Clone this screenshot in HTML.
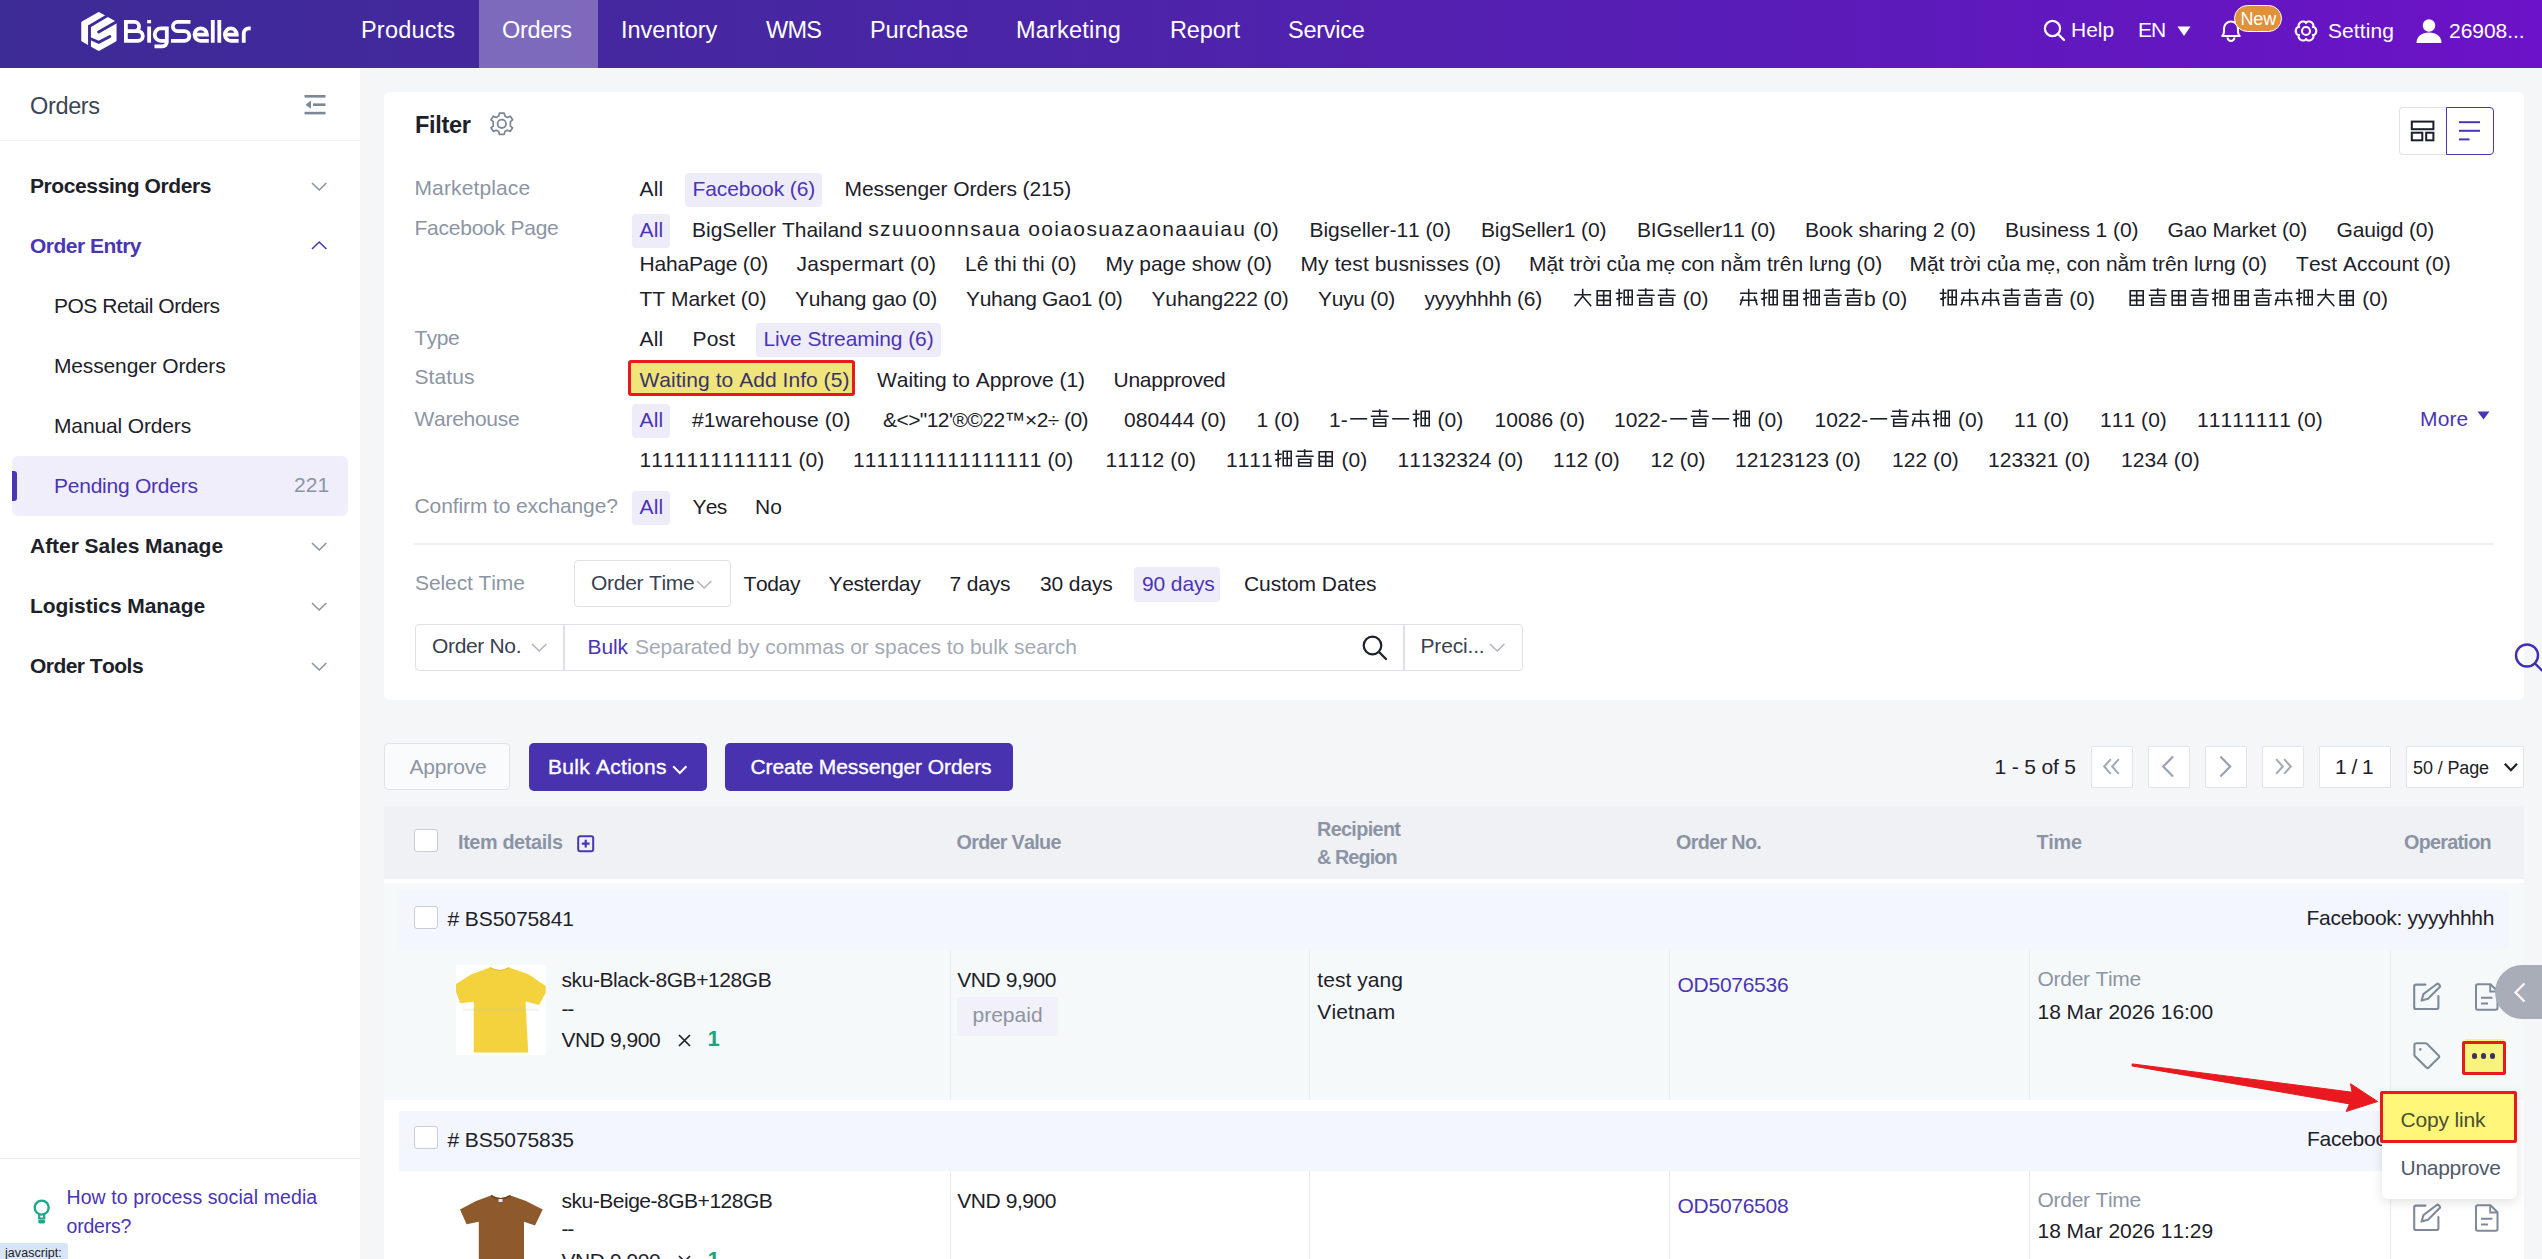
<!DOCTYPE html>
<html><head><meta charset="utf-8"><title>BigSeller Orders</title>
<style>
*{margin:0;padding:0;box-sizing:border-box}
html,body{width:2542px;height:1259px;overflow:hidden;background:#f5f6f8;font-family:"Liberation Sans",sans-serif;}
.t{position:absolute;white-space:nowrap;font-kerning:none;}
.b{position:absolute;}
svg.b{overflow:visible}
.cj{display:inline-block;overflow:hidden;vertical-align:top;white-space:nowrap;height:23px;line-height:23px}
.th{}
.cj{position:relative}
.ct{color:transparent}
.pg{position:absolute;left:0;top:0}
.pt{position:absolute;left:0;top:0}
</style></head><body>
<div class="b" style="left:0.0px;top:0.0px;width:2542.0px;height:68.0px;background:linear-gradient(90deg,#3d2b96 0%,#4a25a6 40%,#5a1cb8 70%,#6c12c8 100%);"></div>
<div class="b" style="left:479.0px;top:0.0px;width:119.0px;height:68.0px;background:rgba(255,255,255,0.31);"></div>
<svg class="b" style="left:75.0px;top:5.0px;" width="50" height="50" viewBox="0 0 50 50">
<path d="M23.8 8.3 L40.3 17.6 L40.3 35.3 L23.8 44.6 L7.5 35.3 L7.5 17.6 Z" fill="#fff" stroke="#fff" stroke-width="2.5" stroke-linejoin="round"/>
<g stroke="#3e2b98" fill="none" stroke-width="2.9">
<path d="M14.5 20 L14.5 49"/>
<path d="M14.5 21.2 L36 8.6"/>
<path d="M23.6 27.1 L46 14.2" stroke-linecap="round"/>
<path d="M14.5 33.2 L23.8 37.4 L34.8 31.5" stroke-linecap="round" stroke-linejoin="miter"/>
</g></svg>
<svg class="b" style="left:115.0px;top:10.0px;" width="140" height="40" viewBox="0 0 140 40"><g fill="none" stroke="#fff" stroke-width="3.8"><path d="M10.9 10 V32.7 M9 11.9 H19.5 A4.6 4.6 0 0 1 19.5 21.1 H10.9 M10.9 21.1 H22.95 A4.85 4.85 0 0 1 22.95 30.8 H9"/><path d="M34.15 16.5 V32.7"/><path d="M51.8 16.5 V32 A4.3 4.3 0 0 1 47.5 36.3 H39.5 M51.8 18.4 H45.9 A6.2 6.2 0 0 0 45.9 30.8 H51.8"/><path d="M75.5 11.9 H62.5 A4.6 4.6 0 0 0 62.5 21.1 H69.5 A4.85 4.85 0 0 1 69.5 30.8 H56"/><path d="M79.5 24.6 H91.9 A6.2 6.2 0 1 0 85.7 30.8 H93.8"/><path d="M97.8 10 V32.7 M104.3 10 V32.7"/><path d="M109.9 24.6 H121.7 A5.9 6.2 0 1 0 115.8 30.8 H123.6"/><path d="M128.75 32.7 V23.5 A5.1 5.1 0 0 1 133.85 18.4 H135.7"/></g><rect x="32.2" y="10" width="3.9" height="3.3" fill="#fff"/></svg>
<div class="t " style="left:361.0px;top:16.2px;font-size:23.5px;line-height:28px;color:#fff;letter-spacing:0.195px;">Products</div>
<div class="t " style="left:502.0px;top:16.2px;font-size:23.5px;line-height:28px;color:#fff;letter-spacing:-0.346px;">Orders</div>
<div class="t " style="left:621.0px;top:16.2px;font-size:23.5px;line-height:28px;color:#fff;letter-spacing:-0.047px;">Inventory</div>
<div class="t " style="left:766.0px;top:16.2px;font-size:23.5px;line-height:28px;color:#fff;letter-spacing:-0.708px;">WMS</div>
<div class="t " style="left:870.0px;top:16.2px;font-size:23.5px;line-height:28px;color:#fff;letter-spacing:-0.139px;">Purchase</div>
<div class="t " style="left:1016.0px;top:16.2px;font-size:23.5px;line-height:28px;color:#fff;letter-spacing:0.205px;">Marketing</div>
<div class="t " style="left:1170.0px;top:16.2px;font-size:23.5px;line-height:28px;color:#fff;letter-spacing:-0.12px;">Report</div>
<div class="t " style="left:1288.0px;top:16.2px;font-size:23.5px;line-height:28px;color:#fff;letter-spacing:-0.268px;">Service</div>
<svg class="b" style="left:2043.0px;top:19.0px;" width="24" height="24" viewBox="0 0 24 24"><circle cx="9.5" cy="9.5" r="7.6" fill="none" stroke="#fff" stroke-width="2.2"/><path d="M15 15 L21 21" stroke="#fff" stroke-width="2.4" stroke-linecap="round"/></svg>
<div class="t " style="left:2071.0px;top:16.8px;font-size:21px;line-height:25px;color:#fff;letter-spacing:-0.039px;">Help</div>
<div class="t " style="left:2138.0px;top:16.8px;font-size:21px;line-height:25px;color:#fff;letter-spacing:-1.125px;">EN</div>
<svg class="b" style="left:2177.0px;top:26.0px;" width="14" height="11" viewBox="0 0 14 11"><path d="M0.5 0.5 L13.5 0.5 L7 10 Z" fill="#fff"/></svg>
<svg class="b" style="left:2219.0px;top:19.0px;" width="24" height="24" viewBox="0 0 24 24"><path d="M3.3 17 Q5 15.3 5 12.5 V9.5 A7 7 0 0 1 19 9.5 V12.5 Q19 15.3 20.7 17 Z" fill="none" stroke="#fff" stroke-width="2.1" stroke-linejoin="round"/><path d="M8.6 18.6 A3.4 3.4 0 0 0 15.4 18.6" fill="none" stroke="#fff" stroke-width="2.1"/></svg>
<div class="b" style="left:2233.6px;top:4.6px;width:48.6px;height:27.4px;background:#e0913a;border:1.4px solid #fff;border-radius:14px;"></div>
<div class="t " style="left:2240.4px;top:7.8px;font-size:18px;line-height:22px;color:#fff;letter-spacing:-0.031px;">New</div>
<svg class="b" style="left:2295.0px;top:20.0px;" width="22" height="22" viewBox="0 0 22 22"><path d="M21.30 11.00 L21.27 11.54 L21.18 12.07 L21.03 12.59 L20.82 13.09 L20.55 13.56 L20.22 13.99 L19.83 14.39 L19.37 14.72 L18.81 14.98 L17.84 14.95 L18.35 15.77 L18.41 16.38 L18.35 16.95 L18.20 17.49 L17.99 17.99 L17.72 18.46 L17.39 18.89 L17.02 19.28 L16.60 19.62 L16.15 19.92 L15.67 20.16 L15.16 20.35 L14.64 20.48 L14.10 20.54 L13.56 20.55 L13.02 20.48 L12.48 20.34 L11.96 20.11 L11.46 19.75 L11.00 18.90 L10.54 19.75 L10.04 20.11 L9.52 20.34 L8.98 20.48 L8.44 20.55 L7.90 20.54 L7.36 20.48 L6.84 20.35 L6.33 20.16 L5.85 19.92 L5.40 19.62 L4.98 19.28 L4.61 18.89 L4.28 18.46 L4.01 17.99 L3.80 17.49 L3.65 16.95 L3.59 16.38 L3.65 15.77 L4.16 14.95 L3.19 14.98 L2.63 14.72 L2.17 14.39 L1.78 13.99 L1.45 13.56 L1.18 13.09 L0.97 12.59 L0.82 12.07 L0.73 11.54 L0.70 11.00 L0.73 10.46 L0.82 9.93 L0.97 9.41 L1.18 8.91 L1.45 8.44 L1.78 8.01 L2.17 7.61 L2.63 7.28 L3.19 7.02 L4.16 7.05 L3.65 6.23 L3.59 5.62 L3.65 5.05 L3.80 4.51 L4.01 4.01 L4.28 3.54 L4.61 3.11 L4.98 2.72 L5.40 2.38 L5.85 2.08 L6.33 1.84 L6.84 1.65 L7.36 1.52 L7.90 1.46 L8.44 1.45 L8.98 1.52 L9.52 1.66 L10.04 1.89 L10.54 2.25 L11.00 3.10 L11.46 2.25 L11.96 1.89 L12.48 1.66 L13.02 1.52 L13.56 1.45 L14.10 1.46 L14.64 1.52 L15.16 1.65 L15.67 1.84 L16.15 2.08 L16.60 2.38 L17.02 2.72 L17.39 3.11 L17.72 3.54 L17.99 4.01 L18.20 4.51 L18.35 5.05 L18.41 5.62 L18.35 6.23 L17.84 7.05 L18.81 7.02 L19.37 7.28 L19.83 7.61 L20.22 8.01 L20.55 8.44 L20.82 8.91 L21.03 9.41 L21.18 9.93 L21.27 10.46 L21.30 11.00 Z" fill="none" stroke="#fff" stroke-width="2.1" stroke-linejoin="round"/><circle cx="11" cy="11" r="4" fill="none" stroke="#fff" stroke-width="2.1"/></svg>
<div class="t " style="left:2328.0px;top:17.8px;font-size:21px;line-height:25px;color:#fff;letter-spacing:0.074px;">Setting</div>
<svg class="b" style="left:2416.0px;top:18.0px;" width="26" height="26" viewBox="0 0 26 26"><circle cx="13" cy="7.5" r="6.2" fill="#fff"/><path d="M0.5 25 C0.5 18 6 14.5 13 14.5 C20 14.5 25.5 18 25.5 25 Z" fill="#fff"/></svg>
<div class="t " style="left:2449.0px;top:17.8px;font-size:21px;line-height:25px;color:#fff;letter-spacing:-0.033px;">26908...</div>
<div class="b" style="left:0.0px;top:68.0px;width:360.0px;height:1191.0px;background:#fff;"></div>
<div class="b" style="left:0.0px;top:140.0px;width:360.0px;height:1.0px;background:#eff1f4;"></div>
<div class="t " style="left:30.0px;top:91.5px;font-size:23.5px;line-height:28px;color:#3a4556;letter-spacing:-0.346px;">Orders</div>
<svg class="b" style="left:304.0px;top:95.0px;" width="22" height="20" viewBox="0 0 22 20"><g fill="#7d8797"><rect x="0.5" y="0" width="21" height="2.6"/><rect x="9" y="8.4" width="12.5" height="2.6"/><rect x="0.5" y="16.8" width="21" height="2.6"/><path d="M1.5 9.7 L7 5.6 L7 13.8 Z"/></g></svg>
<div class="t " style="left:30.0px;top:173.3px;font-size:21px;line-height:25px;color:#1d2129;font-weight:700;letter-spacing:-0.403px;">Processing Orders</div>
<svg class="b" style="left:311.0px;top:182.3px;" width="17" height="9" viewBox="0 0 17 9"><path d="M1 1 L8.2 8 L15.4 1" fill="none" stroke="#8a94a4" stroke-width="1.6"/></svg>
<div class="t " style="left:30.0px;top:233.0px;font-size:21px;line-height:25px;color:#4a35b5;font-weight:700;letter-spacing:-0.516px;">Order Entry</div>
<svg class="b" style="left:311.0px;top:240.7px;" width="17" height="9" viewBox="0 0 17 9"><path d="M1 8 L8.2 1 L15.4 8" fill="none" stroke="#4a35b5" stroke-width="1.6"/></svg>
<div class="t " style="left:30.0px;top:533.0px;font-size:21px;line-height:25px;color:#1d2129;font-weight:700;letter-spacing:-0.038px;">After Sales Manage</div>
<svg class="b" style="left:311.0px;top:542.0px;" width="17" height="9" viewBox="0 0 17 9"><path d="M1 1 L8.2 8 L15.4 1" fill="none" stroke="#8a94a4" stroke-width="1.6"/></svg>
<div class="t " style="left:30.0px;top:593.0px;font-size:21px;line-height:25px;color:#1d2129;font-weight:700;letter-spacing:-0.072px;">Logistics Manage</div>
<svg class="b" style="left:311.0px;top:602.0px;" width="17" height="9" viewBox="0 0 17 9"><path d="M1 1 L8.2 8 L15.4 1" fill="none" stroke="#8a94a4" stroke-width="1.6"/></svg>
<div class="t " style="left:30.0px;top:653.0px;font-size:21px;line-height:25px;color:#1d2129;font-weight:700;letter-spacing:-0.544px;">Order Tools</div>
<svg class="b" style="left:311.0px;top:662.0px;" width="17" height="9" viewBox="0 0 17 9"><path d="M1 1 L8.2 8 L15.4 1" fill="none" stroke="#8a94a4" stroke-width="1.6"/></svg>
<div class="b" style="left:12.0px;top:456.0px;width:336.0px;height:60.0px;background:#f1eefb;border-radius:6px;"></div>
<div class="b" style="left:12.0px;top:471.0px;width:5.0px;height:30.0px;background:#4a35b5;border-radius:0 3px 3px 0;"></div>
<div class="t " style="left:54.0px;top:293.0px;font-size:21px;line-height:25px;color:#1d2129;letter-spacing:-0.492px;">POS Retail Orders</div>
<div class="t " style="left:54.0px;top:353.0px;font-size:21px;line-height:25px;color:#1d2129;letter-spacing:-0.15px;">Messenger Orders</div>
<div class="t " style="left:54.0px;top:413.0px;font-size:21px;line-height:25px;color:#1d2129;letter-spacing:-0.145px;">Manual Orders</div>
<div class="t " style="left:54.0px;top:473.0px;font-size:21px;line-height:25px;color:#4a35b5;letter-spacing:-0.238px;">Pending Orders</div>
<div class="t " style="left:294.0px;top:472.0px;font-size:21px;line-height:25px;color:#8a94a4;letter-spacing:0.125px;">221</div>
<div class="b" style="left:0.0px;top:1158.0px;width:360.0px;height:1.0px;background:#eceef2;"></div>
<svg class="b" style="left:32.0px;top:1199.0px;" width="20" height="26" viewBox="0 0 20 26"><circle cx="9.7" cy="8.6" r="7" fill="none" stroke="#1aa988" stroke-width="2.3"/><path d="M7.2 15.2 L7.2 19.5 L12.2 19.5 L12.2 15.2" fill="none" stroke="#1aa988" stroke-width="2.2"/><rect x="6.2" y="20.8" width="7" height="3.6" rx="1.6" fill="#1aa988"/></svg>
<div class="t " style="left:66.5px;top:1186.1px;font-size:19.5px;line-height:23px;color:#4a35b5;letter-spacing:0.097px;">How to process social media</div>
<div class="t " style="left:66.5px;top:1215.3px;font-size:19.5px;line-height:23px;color:#4a35b5;letter-spacing:-0.192px;">orders?</div>
<div class="b" style="left:0.0px;top:1243.0px;width:68.0px;height:16.0px;background:#d8e4f8;border-radius:0 3px 0 0;"></div>
<div class="t " style="left:5.0px;top:1245.5px;font-size:12.5px;line-height:15px;color:#222;letter-spacing:0.055px;">javascript:</div>
<div class="b" style="left:384.0px;top:92.0px;width:2140.0px;height:608.0px;background:#fff;border-radius:6px;"></div>
<div class="t " style="left:415.0px;top:110.8px;font-size:23.5px;line-height:28px;color:#1d2129;font-weight:700;letter-spacing:-0.326px;">Filter</div>
<svg class="b" style="left:490.0px;top:112.0px;" width="24" height="24" viewBox="0 0 24 24"><g transform="translate(11.8,11.8)"><path d="M-2.4 -10.6 L2.4 -10.6 L3.1 -7.7 L5.6 -6.4 L8.5 -7.6 L10.8 -4 L8.6 -2.2 L8.6 2.2 L10.8 4 L8.5 7.6 L5.6 6.4 L3.1 7.7 L2.4 10.6 L-2.4 10.6 L-3.1 7.7 L-5.6 6.4 L-8.5 7.6 L-10.8 4 L-8.6 2.2 L-8.6 -2.2 L-10.8 -4 L-8.5 -7.6 L-5.6 -6.4 L-3.1 -7.7 Z" fill="none" stroke="#7b8694" stroke-width="1.7" stroke-linejoin="round"/><circle r="4.2" fill="none" stroke="#7b8694" stroke-width="1.8"/></g></svg>
<div class="b" style="left:2398.5px;top:107.0px;width:48.5px;height:48.0px;border:1.5px solid #e1e2e8;border-right:none;border-radius:4px 0 0 4px;"></div>
<div class="b" style="left:2446.0px;top:107.0px;width:48.0px;height:48.0px;border:1.6px solid #4a35b5;border-radius:0 4px 4px 0;"></div>
<svg class="b" style="left:2410.0px;top:120.0px;" width="25" height="22" viewBox="0 0 25 22"><g fill="none" stroke="#1a1f29" stroke-width="2"><rect x="1.8" y="1.6" width="21.6" height="7.6"/><rect x="1.8" y="12.7" width="10.5" height="7.6"/><rect x="16.2" y="12.7" width="7.2" height="7.6"/></g></svg>
<svg class="b" style="left:2458.0px;top:120.0px;" width="24" height="22" viewBox="0 0 24 22"><g stroke="#4a35b5" stroke-width="2"><path d="M1 2.2 L22 2.2"/><path d="M1 10.8 L22 10.8"/><path d="M1 19.4 L11.5 19.4"/></g></svg>
<div class="t " style="left:414.5px;top:175.3px;font-size:21px;line-height:25px;color:#8c95a3;letter-spacing:0.129px;">Marketplace</div>
<div class="t " style="left:639.5px;top:175.9px;font-size:21px;line-height:25px;color:#1d2129;letter-spacing:0.193px;">All</div>
<div class="b" style="left:684.7px;top:172.9px;width:137.5px;height:34.0px;background:#efecfa;border-radius:4px;"></div>
<div class="t " style="left:692.5px;top:175.9px;font-size:21px;line-height:25px;color:#4a35b5;letter-spacing:-0.079px;">Facebook (6)</div>
<div class="t " style="left:844.5px;top:175.9px;font-size:21px;line-height:25px;color:#1d2129;letter-spacing:-0.098px;">Messenger Orders (215)</div>
<div class="t " style="left:414.5px;top:214.8px;font-size:21px;line-height:25px;color:#8c95a3;letter-spacing:-0.238px;">Facebook Page</div>
<div class="b" style="left:631.7px;top:213.7px;width:38.7px;height:34.0px;background:#efecfa;border-radius:4px;"></div>
<div class="t " style="left:639.5px;top:216.7px;font-size:21px;line-height:25px;color:#4a35b5;letter-spacing:0.193px;">All</div>
<div class="t " style="left:692.0px;top:216.7px;font-size:21px;line-height:25px;color:#1d2129;">BigSeller Thailand <span class="cj" style="width:379px"><span class="ct">ระบบจัดการสินค้า ออเดอร์และสต็อกออนไลน์</span><span class="pt" style="letter-spacing:1.35px">szuuoonnsaua ooiaosuazaonaauiau</span></span> (0)</div>
<div class="t " style="left:1309.5px;top:216.7px;font-size:21px;line-height:25px;color:#1d2129;letter-spacing:-0.065px;">Bigseller-11 (0)</div>
<div class="t " style="left:1481.0px;top:216.7px;font-size:21px;line-height:25px;color:#1d2129;letter-spacing:-0.132px;">BigSeller1 (0)</div>
<div class="t " style="left:1637.0px;top:216.7px;font-size:21px;line-height:25px;color:#1d2129;letter-spacing:-0.17px;">BIGseller11 (0)</div>
<div class="t " style="left:1805.0px;top:216.7px;font-size:21px;line-height:25px;color:#1d2129;letter-spacing:-0.039px;">Book sharing 2 (0)</div>
<div class="t " style="left:2005.0px;top:216.7px;font-size:21px;line-height:25px;color:#1d2129;letter-spacing:-0.047px;">Business 1 (0)</div>
<div class="t " style="left:2167.5px;top:216.7px;font-size:21px;line-height:25px;color:#1d2129;letter-spacing:-0.104px;">Gao Market (0)</div>
<div class="t " style="left:2336.5px;top:216.7px;font-size:21px;line-height:25px;color:#1d2129;letter-spacing:-0.164px;">Gauigd (0)</div>
<div class="t " style="left:639.5px;top:251.2px;font-size:21px;line-height:25px;color:#1d2129;letter-spacing:-0.193px;">HahaPage (0)</div>
<div class="t " style="left:796.5px;top:251.2px;font-size:21px;line-height:25px;color:#1d2129;letter-spacing:0.231px;">Jaspermart (0)</div>
<div class="t " style="left:965.0px;top:251.2px;font-size:21px;line-height:25px;color:#1d2129;letter-spacing:0.044px;">Lê thi thi (0)</div>
<div class="t " style="left:1105.5px;top:251.2px;font-size:21px;line-height:25px;color:#1d2129;letter-spacing:-0.022px;">My page show (0)</div>
<div class="t " style="left:1300.5px;top:251.2px;font-size:21px;line-height:25px;color:#1d2129;letter-spacing:0.103px;">My test busnisses (0)</div>
<div class="t " style="left:1529.0px;top:251.2px;font-size:21px;line-height:25px;color:#1d2129;letter-spacing:-0.04px;">Mặt trời của mẹ con nằm trên lưng (0)</div>
<div class="t " style="left:1909.5px;top:251.2px;font-size:21px;line-height:25px;color:#1d2129;letter-spacing:-0.083px;">Mặt trời của mẹ, con nằm trên lưng (0)</div>
<div class="t " style="left:2296.0px;top:251.2px;font-size:21px;line-height:25px;color:#1d2129;letter-spacing:0.051px;">Test Account (0)</div>
<div class="t " style="left:639.5px;top:285.8px;font-size:21px;line-height:25px;color:#1d2129;letter-spacing:-0.024px;">TT Market (0)</div>
<div class="t " style="left:795.0px;top:285.8px;font-size:21px;line-height:25px;color:#1d2129;letter-spacing:-0.189px;">Yuhang gao (0)</div>
<div class="t " style="left:966.0px;top:285.8px;font-size:21px;line-height:25px;color:#1d2129;letter-spacing:-0.311px;">Yuhang Gao1 (0)</div>
<div class="t " style="left:1151.5px;top:285.8px;font-size:21px;line-height:25px;color:#1d2129;letter-spacing:-0.141px;">Yuhang222 (0)</div>
<div class="t " style="left:1318.0px;top:285.8px;font-size:21px;line-height:25px;color:#1d2129;letter-spacing:-0.318px;">Yuyu (0)</div>
<div class="t " style="left:1424.5px;top:285.8px;font-size:21px;line-height:25px;color:#1d2129;letter-spacing:-0.224px;">yyyyhhhh (6)</div>
<div class="t " style="left:1572.0px;top:285.8px;font-size:21px;line-height:25px;color:#1d2129;"><span class="cj" style="width:105px"><span class="ct">大藏瑠美音</span><svg class="pg" width="105" height="23" viewBox="0 0 105 23"><g fill="none" stroke="#1d2129" stroke-width="1.6"><path transform="translate(1.2,2.3)" d="M1 6.5 H18 M9.5 0.5 V8 L1.5 18 M9.5 8 L18 18"/><path transform="translate(22.2,2.3)" d="M3 2.5 H16 V17 H3 Z M3 7.3 H16 M3 12.1 H16 M9.5 2.5 V17"/><path transform="translate(43.2,2.3)" d="M4 0.5 V18 M0.5 5 H7.5 M1 11 L7 9 M9 2 H17 V16.5 H9 Z M9 9 H17 M13 2 V16.5"/><path transform="translate(64.2,2.3)" d="M2 2 H17 M9.5 0 V7 M0.5 7 H18.5 M3.5 10 H15.5 V17 H3.5 Z M3.5 13.5 H15.5"/><path transform="translate(85.2,2.3)" d="M2 2 H17 M9.5 0 V7 M0.5 7 H18.5 M3.5 10 H15.5 V17 H3.5 Z M3.5 13.5 H15.5"/></g></svg></span> (0)</div>
<div class="t " style="left:1738.0px;top:285.8px;font-size:21px;line-height:25px;color:#1d2129;"><span class="cj" style="width:126px"><span class="ct">我的直播主页</span><svg class="pg" width="126" height="23" viewBox="0 0 126 23"><g fill="none" stroke="#1d2129" stroke-width="1.6"><path transform="translate(1.2,2.3)" d="M1 5 H18 M1 12 H18 M9.5 0.5 V18 M4 8 L1 17 M15 8 L18 17"/><path transform="translate(22.2,2.3)" d="M4 0.5 V18 M0.5 5 H7.5 M1 11 L7 9 M9 2 H17 V16.5 H9 Z M9 9 H17 M13 2 V16.5"/><path transform="translate(43.2,2.3)" d="M3 2.5 H16 V17 H3 Z M3 7.3 H16 M3 12.1 H16 M9.5 2.5 V17"/><path transform="translate(64.2,2.3)" d="M4 0.5 V18 M0.5 5 H7.5 M1 11 L7 9 M9 2 H17 V16.5 H9 Z M9 9 H17 M13 2 V16.5"/><path transform="translate(85.2,2.3)" d="M2 2 H17 M9.5 0 V7 M0.5 7 H18.5 M3.5 10 H15.5 V17 H3.5 Z M3.5 13.5 H15.5"/><path transform="translate(106.2,2.3)" d="M2 2 H17 M9.5 0 V7 M0.5 7 H18.5 M3.5 10 H15.5 V17 H3.5 Z M3.5 13.5 H15.5"/></g></svg></span>b (0)</div>
<div class="t " style="left:1937.5px;top:285.8px;font-size:21px;line-height:25px;color:#1d2129;"><span class="cj" style="width:126px"><span class="ct">核心业务资产</span><svg class="pg" width="126" height="23" viewBox="0 0 126 23"><g fill="none" stroke="#1d2129" stroke-width="1.6"><path transform="translate(1.2,2.3)" d="M4 0.5 V18 M0.5 5 H7.5 M1 11 L7 9 M9 2 H17 V16.5 H9 Z M9 9 H17 M13 2 V16.5"/><path transform="translate(22.2,2.3)" d="M1 5 H18 M1 12 H18 M9.5 0.5 V18 M4 8 L1 17 M15 8 L18 17"/><path transform="translate(43.2,2.3)" d="M1 5 H18 M1 12 H18 M9.5 0.5 V18 M4 8 L1 17 M15 8 L18 17"/><path transform="translate(64.2,2.3)" d="M2 2 H17 M9.5 0 V7 M0.5 7 H18.5 M3.5 10 H15.5 V17 H3.5 Z M3.5 13.5 H15.5"/><path transform="translate(85.2,2.3)" d="M2 2 H17 M9.5 0 V7 M0.5 7 H18.5 M3.5 10 H15.5 V17 H3.5 Z M3.5 13.5 H15.5"/><path transform="translate(106.2,2.3)" d="M2 2 H17 M9.5 0 V7 M0.5 7 H18.5 M3.5 10 H15.5 V17 H3.5 Z M3.5 13.5 H15.5"/></g></svg></span> (0)</div>
<div class="t " style="left:2125.5px;top:285.8px;font-size:21px;line-height:25px;color:#1d2129;"><span class="cj" style="width:231px"><span class="ct">葫芦岛当代百货有限公司</span><svg class="pg" width="231" height="23" viewBox="0 0 231 23"><g fill="none" stroke="#1d2129" stroke-width="1.6"><path transform="translate(1.2,2.3)" d="M3 2.5 H16 V17 H3 Z M3 7.3 H16 M3 12.1 H16 M9.5 2.5 V17"/><path transform="translate(22.2,2.3)" d="M2 2 H17 M9.5 0 V7 M0.5 7 H18.5 M3.5 10 H15.5 V17 H3.5 Z M3.5 13.5 H15.5"/><path transform="translate(43.2,2.3)" d="M3 2.5 H16 V17 H3 Z M3 7.3 H16 M3 12.1 H16 M9.5 2.5 V17"/><path transform="translate(64.2,2.3)" d="M2 2 H17 M9.5 0 V7 M0.5 7 H18.5 M3.5 10 H15.5 V17 H3.5 Z M3.5 13.5 H15.5"/><path transform="translate(85.2,2.3)" d="M4 0.5 V18 M0.5 5 H7.5 M1 11 L7 9 M9 2 H17 V16.5 H9 Z M9 9 H17 M13 2 V16.5"/><path transform="translate(106.2,2.3)" d="M3 2.5 H16 V17 H3 Z M3 7.3 H16 M3 12.1 H16 M9.5 2.5 V17"/><path transform="translate(127.2,2.3)" d="M2 2 H17 M9.5 0 V7 M0.5 7 H18.5 M3.5 10 H15.5 V17 H3.5 Z M3.5 13.5 H15.5"/><path transform="translate(148.2,2.3)" d="M1 5 H18 M1 12 H18 M9.5 0.5 V18 M4 8 L1 17 M15 8 L18 17"/><path transform="translate(169.2,2.3)" d="M4 0.5 V18 M0.5 5 H7.5 M1 11 L7 9 M9 2 H17 V16.5 H9 Z M9 9 H17 M13 2 V16.5"/><path transform="translate(190.2,2.3)" d="M1 6.5 H18 M9.5 0.5 V8 L1.5 18 M9.5 8 L18 18"/><path transform="translate(211.2,2.3)" d="M3 2.5 H16 V17 H3 Z M3 7.3 H16 M3 12.1 H16 M9.5 2.5 V17"/></g></svg></span> (0)</div>
<div class="t " style="left:414.5px;top:324.8px;font-size:21px;line-height:25px;color:#8c95a3;letter-spacing:-0.5px;">Type</div>
<div class="t " style="left:639.5px;top:325.7px;font-size:21px;line-height:25px;color:#1d2129;letter-spacing:0.193px;">All</div>
<div class="t " style="left:692.5px;top:325.7px;font-size:21px;line-height:25px;color:#1d2129;letter-spacing:0.203px;">Post</div>
<div class="b" style="left:755.7px;top:322.7px;width:185.0px;height:34.0px;background:#efecfa;border-radius:4px;"></div>
<div class="t " style="left:763.5px;top:325.7px;font-size:21px;line-height:25px;color:#4a35b5;letter-spacing:-0.082px;">Live Streaming (6)</div>
<div class="t " style="left:414.5px;top:364.4px;font-size:21px;line-height:25px;color:#8c95a3;letter-spacing:0.094px;">Status</div>
<div class="b" style="left:628.4px;top:360.4px;width:226.3px;height:35.5px;background:#efe57a;border:3.6px solid #e8191f;border-radius:3px;"></div>
<div class="t " style="left:639.4px;top:367.1px;font-size:21px;line-height:25px;color:#3a3366;letter-spacing:0.048px;">Waiting to Add Info (5)</div>
<div class="t " style="left:877.0px;top:367.1px;font-size:21px;line-height:25px;color:#1d2129;letter-spacing:-0.041px;">Waiting to Approve (1)</div>
<div class="t " style="left:1113.5px;top:367.1px;font-size:21px;line-height:25px;color:#1d2129;letter-spacing:-0.239px;">Unapproved</div>
<div class="t " style="left:414.5px;top:405.7px;font-size:21px;line-height:25px;color:#8c95a3;letter-spacing:-0.276px;">Warehouse</div>
<div class="b" style="left:631.7px;top:404.0px;width:38.7px;height:34.0px;background:#efecfa;border-radius:4px;"></div>
<div class="t " style="left:639.5px;top:407.0px;font-size:21px;line-height:25px;color:#4a35b5;letter-spacing:0.193px;">All</div>
<div class="t " style="left:692.0px;top:407.0px;font-size:21px;line-height:25px;color:#1d2129;letter-spacing:0.071px;">#1warehouse (0)</div>
<div class="t " style="left:883.0px;top:407.0px;font-size:21px;line-height:25px;color:#1d2129;letter-spacing:-0.559px;">&amp;&lt;&gt;"12'®©22™×2÷ (0)</div>
<div class="t " style="left:1124.0px;top:407.0px;font-size:21px;line-height:25px;color:#1d2129;letter-spacing:0.075px;">080444 (0)</div>
<div class="t " style="left:1256.5px;top:407.0px;font-size:21px;line-height:25px;color:#1d2129;letter-spacing:0.025px;">1 (0)</div>
<div class="t " style="left:1329.0px;top:407.0px;font-size:21px;line-height:25px;color:#1d2129;">1-<span class="cj" style="width:84px"><span class="ct">一货一位</span><svg class="pg" width="84" height="23" viewBox="0 0 84 23"><g fill="none" stroke="#1d2129" stroke-width="1.6"><path transform="translate(1.2,2.3)" d="M1 9.5 H18"/><path transform="translate(22.2,2.3)" d="M2 2 H17 M9.5 0 V7 M0.5 7 H18.5 M3.5 10 H15.5 V17 H3.5 Z M3.5 13.5 H15.5"/><path transform="translate(43.2,2.3)" d="M1 9.5 H18"/><path transform="translate(64.2,2.3)" d="M4 0.5 V18 M0.5 5 H7.5 M1 11 L7 9 M9 2 H17 V16.5 H9 Z M9 9 H17 M13 2 V16.5"/></g></svg></span> (0)</div>
<div class="t " style="left:1494.5px;top:407.0px;font-size:21px;line-height:25px;color:#1d2129;letter-spacing:0.069px;">10086 (0)</div>
<div class="t " style="left:1614.0px;top:407.0px;font-size:21px;line-height:25px;color:#1d2129;">1022-<span class="cj" style="width:84px"><span class="ct">一货一位</span><svg class="pg" width="84" height="23" viewBox="0 0 84 23"><g fill="none" stroke="#1d2129" stroke-width="1.6"><path transform="translate(1.2,2.3)" d="M1 9.5 H18"/><path transform="translate(22.2,2.3)" d="M2 2 H17 M9.5 0 V7 M0.5 7 H18.5 M3.5 10 H15.5 V17 H3.5 Z M3.5 13.5 H15.5"/><path transform="translate(43.2,2.3)" d="M1 9.5 H18"/><path transform="translate(64.2,2.3)" d="M4 0.5 V18 M0.5 5 H7.5 M1 11 L7 9 M9 2 H17 V16.5 H9 Z M9 9 H17 M13 2 V16.5"/></g></svg></span> (0)</div>
<div class="t " style="left:1814.5px;top:407.0px;font-size:21px;line-height:25px;color:#1d2129;">1022-<span class="cj" style="width:84px"><span class="ct">一货多位</span><svg class="pg" width="84" height="23" viewBox="0 0 84 23"><g fill="none" stroke="#1d2129" stroke-width="1.6"><path transform="translate(1.2,2.3)" d="M1 9.5 H18"/><path transform="translate(22.2,2.3)" d="M2 2 H17 M9.5 0 V7 M0.5 7 H18.5 M3.5 10 H15.5 V17 H3.5 Z M3.5 13.5 H15.5"/><path transform="translate(43.2,2.3)" d="M1 5 H18 M1 12 H18 M9.5 0.5 V18 M4 8 L1 17 M15 8 L18 17"/><path transform="translate(64.2,2.3)" d="M4 0.5 V18 M0.5 5 H7.5 M1 11 L7 9 M9 2 H17 V16.5 H9 Z M9 9 H17 M13 2 V16.5"/></g></svg></span> (0)</div>
<div class="t " style="left:2014.0px;top:407.0px;font-size:21px;line-height:25px;color:#1d2129;letter-spacing:0.042px;">11 (0)</div>
<div class="t " style="left:2100.0px;top:407.0px;font-size:21px;line-height:25px;color:#1d2129;letter-spacing:0.054px;">111 (0)</div>
<div class="t " style="left:2197.0px;top:407.0px;font-size:21px;line-height:25px;color:#1d2129;letter-spacing:0.083px;">11111111 (0)</div>
<div class="t " style="left:2420.0px;top:405.8px;font-size:21px;line-height:25px;color:#4a35b5;letter-spacing:0.133px;">More</div>
<svg class="b" style="left:2477.0px;top:411.0px;" width="13" height="9" viewBox="0 0 13 9"><path d="M0.5 0.5 L12.5 0.5 L6.5 8.6 Z" fill="#4a35b5"/></svg>
<div class="t " style="left:639.5px;top:447.2px;font-size:21px;line-height:25px;color:#1d2129;letter-spacing:0.096px;">1111111111111 (0)</div>
<div class="t " style="left:853.0px;top:447.2px;font-size:21px;line-height:25px;color:#1d2129;letter-spacing:0.1px;">1111111111111111 (0)</div>
<div class="t " style="left:1105.5px;top:447.2px;font-size:21px;line-height:25px;color:#1d2129;letter-spacing:0.069px;">11112 (0)</div>
<div class="t " style="left:1226.0px;top:447.2px;font-size:21px;line-height:25px;color:#1d2129;">1111<span class="cj" style="width:63px"><span class="ct">改仓库</span><svg class="pg" width="63" height="23" viewBox="0 0 63 23"><g fill="none" stroke="#1d2129" stroke-width="1.6"><path transform="translate(1.2,2.3)" d="M4 0.5 V18 M0.5 5 H7.5 M1 11 L7 9 M9 2 H17 V16.5 H9 Z M9 9 H17 M13 2 V16.5"/><path transform="translate(22.2,2.3)" d="M2 2 H17 M9.5 0 V7 M0.5 7 H18.5 M3.5 10 H15.5 V17 H3.5 Z M3.5 13.5 H15.5"/><path transform="translate(43.2,2.3)" d="M3 2.5 H16 V17 H3 Z M3 7.3 H16 M3 12.1 H16 M9.5 2.5 V17"/></g></svg></span> (0)</div>
<div class="t " style="left:1397.5px;top:447.2px;font-size:21px;line-height:25px;color:#1d2129;letter-spacing:0.083px;">11132324 (0)</div>
<div class="t " style="left:1553.0px;top:447.2px;font-size:21px;line-height:25px;color:#1d2129;letter-spacing:0.054px;">112 (0)</div>
<div class="t " style="left:1650.5px;top:447.2px;font-size:21px;line-height:25px;color:#1d2129;letter-spacing:0.042px;">12 (0)</div>
<div class="t " style="left:1735.0px;top:447.2px;font-size:21px;line-height:25px;color:#1d2129;letter-spacing:0.083px;">12123123 (0)</div>
<div class="t " style="left:1892.0px;top:447.2px;font-size:21px;line-height:25px;color:#1d2129;letter-spacing:0.054px;">122 (0)</div>
<div class="t " style="left:1988.0px;top:447.2px;font-size:21px;line-height:25px;color:#1d2129;letter-spacing:0.075px;">123321 (0)</div>
<div class="t " style="left:2121.0px;top:447.2px;font-size:21px;line-height:25px;color:#1d2129;letter-spacing:0.062px;">1234 (0)</div>
<div class="t " style="left:414.5px;top:492.9px;font-size:21px;line-height:25px;color:#8c95a3;letter-spacing:-0.105px;">Confirm to exchange?</div>
<div class="b" style="left:631.7px;top:490.8px;width:38.7px;height:34.0px;background:#efecfa;border-radius:4px;"></div>
<div class="t " style="left:639.5px;top:493.8px;font-size:21px;line-height:25px;color:#4a35b5;letter-spacing:0.193px;">All</div>
<div class="t " style="left:692.5px;top:493.8px;font-size:21px;line-height:25px;color:#1d2129;letter-spacing:-0.75px;">Yes</div>
<div class="t " style="left:755.0px;top:493.8px;font-size:21px;line-height:25px;color:#1d2129;letter-spacing:0.062px;">No</div>
<div class="b" style="left:414.0px;top:543.0px;width:2080.0px;height:1.5px;background:#eceef2;"></div>
<div class="t " style="left:415.0px;top:570.1px;font-size:21px;line-height:25px;color:#8c95a3;letter-spacing:-0.101px;">Select Time</div>
<div class="b" style="left:573.6px;top:560.2px;width:157.0px;height:47.2px;border:1.5px solid #dfe1e8;border-radius:4px;"></div>
<div class="t " style="left:591.0px;top:570.1px;font-size:21px;line-height:25px;color:#3a4150;letter-spacing:-0.27px;">Order Time</div>
<svg class="b" style="left:696.0px;top:579.5px;" width="17" height="9" viewBox="0 0 17 9"><path d="M1 1 L8.2 8 L15.4 1" fill="none" stroke="#b0b4bd" stroke-width="1.6"/></svg>
<div class="b" style="left:1134.4px;top:567.0px;width:86.0px;height:35.0px;background:#efecfa;border-radius:4px;"></div>
<div class="t " style="left:743.5px;top:570.6px;font-size:21px;line-height:25px;color:#1d2129;letter-spacing:-0.359px;">Today</div>
<div class="t " style="left:828.5px;top:570.6px;font-size:21px;line-height:25px;color:#1d2129;letter-spacing:-0.29px;">Yesterday</div>
<div class="t " style="left:949.5px;top:570.6px;font-size:21px;line-height:25px;color:#1d2129;letter-spacing:-0.159px;">7 days</div>
<div class="t " style="left:1040.0px;top:570.6px;font-size:21px;line-height:25px;color:#1d2129;letter-spacing:-0.118px;">30 days</div>
<div class="t " style="left:1244.0px;top:570.6px;font-size:21px;line-height:25px;color:#1d2129;letter-spacing:-0.048px;">Custom Dates</div>
<div class="t " style="left:1142.0px;top:570.6px;font-size:21px;line-height:25px;color:#4a35b5;letter-spacing:-0.118px;">90 days</div>
<div class="b" style="left:414.5px;top:623.5px;width:1108.0px;height:47.0px;border:1.5px solid #dfe1e8;border-radius:4px;"></div>
<div class="b" style="left:563.0px;top:623.5px;width:1.5px;height:47.0px;background:#dfe1e8;"></div>
<div class="b" style="left:1403.0px;top:623.5px;width:1.5px;height:47.0px;background:#dfe1e8;"></div>
<div class="t " style="left:432.0px;top:633.0px;font-size:21px;line-height:25px;color:#3a4150;letter-spacing:-0.333px;">Order No.</div>
<svg class="b" style="left:531.0px;top:642.5px;" width="17" height="9" viewBox="0 0 17 9"><path d="M1 1 L8.2 8 L15.4 1" fill="none" stroke="#b0b4bd" stroke-width="1.6"/></svg>
<div class="t " style="left:587.5px;top:633.5px;font-size:21px;line-height:25px;color:#4a35b5;letter-spacing:-0.109px;">Bulk</div>
<div class="t " style="left:635.0px;top:633.5px;font-size:21px;line-height:25px;color:#a3aab6;letter-spacing:-0.037px;">Separated by commas or spaces to bulk search</div>
<svg class="b" style="left:1362.0px;top:635.0px;" width="26" height="26" viewBox="0 0 26 26"><circle cx="10.5" cy="10.5" r="8.8" fill="none" stroke="#1d2129" stroke-width="2.2"/><path d="M17 17 L24 24" stroke="#1d2129" stroke-width="2.3" stroke-linecap="round"/></svg>
<div class="t " style="left:1420.5px;top:633.0px;font-size:21px;line-height:25px;color:#3a4150;letter-spacing:-0.164px;">Preci...</div>
<svg class="b" style="left:1488.5px;top:642.5px;" width="17" height="9" viewBox="0 0 17 9"><path d="M1 1 L8.2 8 L15.4 1" fill="none" stroke="#b0b4bd" stroke-width="1.6"/></svg>
<svg class="b" style="left:2514.0px;top:643.0px;" width="30" height="30" viewBox="0 0 30 30"><circle cx="13" cy="12.5" r="11" fill="none" stroke="#3f2fb5" stroke-width="2.4"/><path d="M21 20.5 L28 27.5" stroke="#3f2fb5" stroke-width="2.4" stroke-linecap="round"/></svg>
<div class="b" style="left:384.4px;top:743.4px;width:126.0px;height:47.1px;background:#fafbfc;border:1.5px solid #e1e3e8;border-radius:4px;"></div>
<div class="t " style="left:409.4px;top:754.1px;font-size:21px;line-height:25px;color:#8c95a3;letter-spacing:-0.141px;">Approve</div>
<div class="b" style="left:529.1px;top:743.0px;width:178.0px;height:48.0px;background:#4832b0;border-radius:5px;"></div>
<div class="t " style="left:548.0px;top:754.2px;font-size:21px;line-height:25px;color:#fff;font-weight:500;letter-spacing:0.266px;-webkit-text-stroke:0.35px #fff;">Bulk Actions</div>
<svg class="b" style="left:671.5px;top:765.0px;" width="16" height="10" viewBox="0 0 16 10"><path d="M1.2 1.2 L7.8 8 L14.4 1.2" fill="none" stroke="#fff" stroke-width="2"/></svg>
<div class="b" style="left:724.9px;top:743.0px;width:288.0px;height:48.0px;background:#4832b0;border-radius:5px;"></div>
<div class="t " style="left:750.5px;top:754.2px;font-size:21px;line-height:25px;color:#fff;font-weight:500;letter-spacing:-0.077px;-webkit-text-stroke:0.35px #fff;">Create Messenger Orders</div>
<div class="t " style="left:1994.5px;top:753.7px;font-size:21px;line-height:25px;color:#1d2129;letter-spacing:-0.155px;">1 - 5 of 5</div>
<div class="b" style="left:2091.3px;top:746.4px;width:41.4px;height:41.2px;background:#fff;border:1.5px solid #e3e5ea;border-radius:1px;"></div>
<div class="b" style="left:2148.2px;top:746.4px;width:41.4px;height:41.2px;background:#fff;border:1.5px solid #e3e5ea;border-radius:1px;"></div>
<div class="b" style="left:2205.0px;top:746.4px;width:41.7px;height:41.2px;background:#fff;border:1.5px solid #e3e5ea;border-radius:1px;"></div>
<div class="b" style="left:2262.3px;top:746.4px;width:41.3px;height:41.2px;background:#fff;border:1.5px solid #e3e5ea;border-radius:1px;"></div>
<div class="b" style="left:2319.2px;top:746.4px;width:71.4px;height:41.2px;background:#fff;border:1.5px solid #e3e5ea;border-radius:1px;"></div>
<div class="b" style="left:2406.2px;top:746.4px;width:117.5px;height:41.2px;background:#fff;border:1.5px solid #e3e5ea;border-radius:1px;"></div>
<svg class="b" style="left:2101.0px;top:757.0px;" width="22" height="20" viewBox="0 0 22 20"><g fill="none" stroke="#a0a8b5" stroke-width="2"><path d="M9.8 2.2 L3.2 9.5 L9.8 16.8"/><path d="M17.8 2.2 L11.2 9.5 L17.8 16.8"/></g></svg>
<svg class="b" style="left:2159.0px;top:755.0px;" width="18" height="24" viewBox="0 0 18 24"><path d="M14 1.6 L4.2 11.6 L14 21.6" fill="none" stroke="#98a2b3" stroke-width="2.2"/></svg>
<svg class="b" style="left:2216.0px;top:755.0px;" width="18" height="24" viewBox="0 0 18 24"><path d="M4.4 1.6 L14.2 11.6 L4.4 21.6" fill="none" stroke="#98a2b3" stroke-width="2.2"/></svg>
<svg class="b" style="left:2272.0px;top:757.0px;" width="22" height="20" viewBox="0 0 22 20"><g fill="none" stroke="#a0a8b5" stroke-width="2"><path d="M4.2 2.2 L10.8 9.5 L4.2 16.8"/><path d="M12.2 2.2 L18.8 9.5 L12.2 16.8"/></g></svg>
<div class="t " style="left:2335.0px;top:753.7px;font-size:21px;line-height:25px;color:#1d2129;letter-spacing:-0.566px;">1 / 1</div>
<div class="t " style="left:2413.0px;top:756.6px;font-size:18px;line-height:22px;color:#1d2129;letter-spacing:-0.12px;">50 / Page</div>
<svg class="b" style="left:2503.0px;top:762.0px;" width="16" height="11" viewBox="0 0 16 11"><path d="M1.8 1.8 L7.9 8.2 L14 1.8" fill="none" stroke="#1d2129" stroke-width="2.3"/></svg>
<div class="b" style="left:384.0px;top:805.6px;width:2140.0px;height:73.6px;background:#f0f1f4;"></div>
<div class="b" style="left:414.3px;top:829.3px;width:23.6px;height:23.2px;background:#fff;border:1.5px solid #c9ccd2;border-radius:3px;"></div>
<div class="t " style="left:458.0px;top:829.8px;font-size:19.8px;line-height:24px;color:#8a94a4;font-weight:700;letter-spacing:-0.357px;">Item details</div>
<svg class="b" style="left:577.0px;top:835.0px;" width="18" height="18" viewBox="0 0 18 18"><rect x="1.2" y="1.2" width="15" height="15" rx="2" fill="none" stroke="#4a35b5" stroke-width="2"/><path d="M8.7 4.8 L8.7 12.6 M4.8 8.7 L12.6 8.7" stroke="#4a35b5" stroke-width="2.2"/></svg>
<div class="t " style="left:956.5px;top:829.8px;font-size:19.8px;line-height:24px;color:#8a94a4;font-weight:700;letter-spacing:-0.719px;">Order Value</div>
<div class="t " style="left:1317.0px;top:816.8px;font-size:19.8px;line-height:24px;color:#8a94a4;font-weight:700;letter-spacing:-0.641px;">Recipient</div>
<div class="t " style="left:1317.0px;top:845.1px;font-size:19.8px;line-height:24px;color:#8a94a4;font-weight:700;letter-spacing:-0.9px;">&amp; Region</div>
<div class="t " style="left:1676.0px;top:830.3px;font-size:19.8px;line-height:24px;color:#8a94a4;font-weight:700;letter-spacing:-0.672px;">Order No.</div>
<div class="t " style="left:2036.5px;top:830.3px;font-size:19.8px;line-height:24px;color:#8a94a4;font-weight:700;letter-spacing:-0.262px;">Time</div>
<div class="t " style="left:2404.0px;top:830.3px;font-size:19.8px;line-height:24px;color:#8a94a4;font-weight:700;letter-spacing:-0.731px;">Operation</div>
<div class="b" style="left:384.0px;top:879.2px;width:2140.0px;height:380.0px;background:#fff;"></div>
<div class="b" style="left:384.0px;top:882.5px;width:2140.0px;height:217.5px;background:#f6f9f9;"></div>
<div class="b" style="left:399.0px;top:890.0px;width:2109.5px;height:60.0px;background:#f3f6fc;"></div>
<div class="b" style="left:414.0px;top:906.2px;width:23.6px;height:23.2px;background:#fff;border:1.5px solid #c9ccd2;border-radius:3px;"></div>
<div class="t " style="left:447.5px;top:906.3px;font-size:21px;line-height:25px;color:#1d2129;letter-spacing:-0.085px;"># BS5075841</div>
<div class="t " style="left:2306.5px;top:905.4px;font-size:21px;line-height:25px;color:#1d2129;letter-spacing:-0.278px;">Facebook: yyyyhhhh</div>
<div class="b" style="left:949.5px;top:950.0px;width:1.0px;height:150.0px;background:#e9ecee;"></div>
<div class="b" style="left:1309.0px;top:950.0px;width:1.0px;height:150.0px;background:#e9ecee;"></div>
<div class="b" style="left:1669.3px;top:950.0px;width:1.0px;height:150.0px;background:#e9ecee;"></div>
<div class="b" style="left:2029.2px;top:950.0px;width:1.0px;height:150.0px;background:#e9ecee;"></div>
<div class="b" style="left:2389.6px;top:950.0px;width:1.0px;height:150.0px;background:#e9ecee;"></div>
<div class="b" style="left:456.0px;top:965.0px;width:90.0px;height:90.0px;background:#fff;"></div>
<svg class="b" style="left:456.0px;top:965.0px;" width="90" height="90" viewBox="0 0 90 90"><path d="M34 2.5 Q44 7.5 53.2 2.5 L72 9 L89.7 21 L89.7 28 L83 39.9 L69.5 36.5 L72.2 87.5 L17.8 87.5 L17.8 36.7 L4.3 38.3 L0 27 L0 19 L15.4 9.3 Z" fill="#f4d23e"/><path d="M34 2.5 Q44 8.5 53.2 2.5" fill="none" stroke="#e3bf33" stroke-width="1.2"/><g fill="#c9c3b0" opacity="0.22"><rect x="7" y="43.5" width="76" height="2.2"/></g></svg>
<div class="t " style="left:561.5px;top:966.6px;font-size:21px;line-height:25px;color:#1d2129;letter-spacing:-0.414px;">sku-Black-8GB+128GB</div>
<div class="t " style="left:561.5px;top:996.0px;font-size:21px;line-height:25px;color:#1d2129;letter-spacing:-1.203px;">--</div>
<div class="t " style="left:561.5px;top:1026.8px;font-size:21px;line-height:25px;color:#1d2129;letter-spacing:-0.448px;">VND 9,900</div>
<svg class="b" style="left:678.0px;top:1034.0px;" width="13" height="13" viewBox="0 0 13 13"><path d="M1 1 L12 12 M12 1 L1 12" stroke="#1d2129" stroke-width="1.7"/></svg>
<div class="t " style="left:707.5px;top:1026.3px;font-size:22px;line-height:26px;color:#1aa57a;font-weight:700;letter-spacing:0.328px;">1</div>
<div class="t " style="left:957.3px;top:966.6px;font-size:21px;line-height:25px;color:#1d2129;letter-spacing:-0.448px;">VND 9,900</div>
<div class="b" style="left:957.1px;top:997.0px;width:100.8px;height:38.8px;background:#f2f0f8;border-radius:2px;"></div>
<div class="t " style="left:972.5px;top:1002.2px;font-size:21px;line-height:25px;color:#8c95a3;">prepaid</div>
<div class="t " style="left:1317.3px;top:966.6px;font-size:21px;line-height:25px;color:#1d2129;letter-spacing:0.04px;">test yang</div>
<div class="t " style="left:1317.3px;top:998.7px;font-size:21px;line-height:25px;color:#1d2129;letter-spacing:0.132px;">Vietnam</div>
<div class="t " style="left:1677.5px;top:972.3px;font-size:21px;line-height:25px;color:#4a35b5;letter-spacing:-0.266px;">OD5076536</div>
<div class="t " style="left:2037.5px;top:966.4px;font-size:21px;line-height:25px;color:#8c95a3;letter-spacing:-0.27px;">Order Time</div>
<div class="t " style="left:2037.5px;top:998.8px;font-size:21px;line-height:25px;color:#1d2129;letter-spacing:-0.04px;">18 Mar 2026 16:00</div>
<svg class="b" style="left:2413.0px;top:981.5px;" width="30" height="30" viewBox="0 0 30 30"><path d="M12.5 2.6 L3 2.6 Q1.2 2.6 1.2 4.4 L1.2 25.2 Q1.2 27 3 27 L23.6 27 Q25.4 27 25.4 25.2 L25.4 14" fill="none" stroke="#7f8a99" stroke-width="2.1" stroke-linecap="round"/><path d="M24.5 1.5 Q26.8 2.6 27.2 4.6 L15 16.8 L8.6 18.6 L10.4 12.2 Z" fill="none" stroke="#7f8a99" stroke-width="2.1" stroke-linejoin="round"/></svg>
<svg class="b" style="left:2475.0px;top:982.5px;" width="26" height="30" viewBox="0 0 26 30"><path d="M2.8 1.3 L15.5 1.3 L22.5 8.3 L22.5 25 Q22.5 26.8 20.7 26.8 L2.8 26.8 Q1 26.8 1 25 L1 3.1 Q1 1.3 2.8 1.3 Z" fill="none" stroke="#7f8a99" stroke-width="2" stroke-linejoin="round"/><path d="M15.2 1.5 L15.2 8.5 L22.3 8.5" fill="none" stroke="#7f8a99" stroke-width="1.8"/><path d="M6 14.8 L17.4 14.8 M6 20.5 L13 20.5" stroke="#7f8a99" stroke-width="2"/></svg>
<svg class="b" style="left:2413.0px;top:1041.5px;" width="28" height="28" viewBox="0 0 28 28"><path d="M1.4 3 Q1.4 1.2 3.2 1.2 L12.4 1.2 Q13.4 1.2 14.2 2 L25.6 13.4 Q26.8 14.6 25.6 15.8 L15.8 25.6 Q14.6 26.8 13.4 25.6 L2 14.2 Q1.4 13.4 1.4 12.4 Z" fill="none" stroke="#7f8a99" stroke-width="2.1"/><circle cx="7.3" cy="7.4" r="1.3" fill="#7f8a99"/></svg>
<div class="b" style="left:2465.0px;top:1039.0px;width:38.5px;height:3.0px;background:#f7f27a;"></div>
<div class="b" style="left:2461.5px;top:1041.3px;width:44.6px;height:33.5px;background:#f8f37c;border:3.4px solid #e8191f;border-radius:2px;"></div>
<div class="b" style="left:2471.7px;top:1053.4px;width:5.2px;height:5.2px;background:#3d2f5e;border-radius:50%;"></div>
<div class="b" style="left:2480.6px;top:1053.4px;width:5.2px;height:5.2px;background:#3d2f5e;border-radius:50%;"></div>
<div class="b" style="left:2489.6px;top:1053.4px;width:5.2px;height:5.2px;background:#3d2f5e;border-radius:50%;"></div>
<div class="b" style="left:384.0px;top:1100.0px;width:2140.0px;height:159.0px;background:#fff;"></div>
<div class="b" style="left:399.0px;top:1111.0px;width:2109.5px;height:59.8px;background:#f3f6fc;"></div>
<div class="b" style="left:414.0px;top:1126.2px;width:23.6px;height:23.2px;background:#fff;border:1.5px solid #c9ccd2;border-radius:3px;"></div>
<div class="t " style="left:447.5px;top:1126.7px;font-size:21px;line-height:25px;color:#1d2129;letter-spacing:-0.085px;"># BS5075835</div>
<div class="t " style="left:2307.0px;top:1126.1px;font-size:21px;line-height:25px;color:#1d2129;letter-spacing:-0.278px;">Facebook: yyyyhhhh</div>
<div class="b" style="left:949.5px;top:1171.0px;width:1.0px;height:88.0px;background:#e9ecee;"></div>
<div class="b" style="left:1309.0px;top:1171.0px;width:1.0px;height:88.0px;background:#e9ecee;"></div>
<div class="b" style="left:1669.3px;top:1171.0px;width:1.0px;height:88.0px;background:#e9ecee;"></div>
<div class="b" style="left:2029.2px;top:1171.0px;width:1.0px;height:88.0px;background:#e9ecee;"></div>
<div class="b" style="left:2389.6px;top:1171.0px;width:1.0px;height:88.0px;background:#e9ecee;"></div>
<svg class="b" style="left:456.0px;top:1190.0px;" width="90" height="75" viewBox="0 0 90 75"><path d="M35 5.5 Q44.5 11 54.5 5.5 L70 11 L86.7 19.6 L79 35.5 L68 31.8 L68 75 L22.8 75 L22.8 31.8 L10.6 34.3 L4 19.6 L20 11 Z" fill="#8e5a2c"/><path d="M35 5.5 Q44.5 12 54.5 5.5" fill="none" stroke="#6e4320" stroke-width="1.6"/><rect x="42.5" y="9" width="4" height="3" fill="#dfe6f2"/></svg>
<div class="t " style="left:561.5px;top:1187.7px;font-size:21px;line-height:25px;color:#1d2129;letter-spacing:-0.484px;">sku-Beige-8GB+128GB</div>
<div class="t " style="left:561.5px;top:1216.0px;font-size:21px;line-height:25px;color:#1d2129;letter-spacing:-1.203px;">--</div>
<div class="t " style="left:561.5px;top:1247.8px;font-size:21px;line-height:25px;color:#1d2129;letter-spacing:-0.448px;">VND 9,900</div>
<svg class="b" style="left:678.0px;top:1255.0px;" width="13" height="13" viewBox="0 0 13 13"><path d="M1 1 L12 12 M12 1 L1 12" stroke="#1d2129" stroke-width="1.7"/></svg>
<div class="t " style="left:707.5px;top:1247.3px;font-size:22px;line-height:26px;color:#1aa57a;font-weight:700;letter-spacing:0.328px;">1</div>
<div class="t " style="left:957.3px;top:1187.7px;font-size:21px;line-height:25px;color:#1d2129;letter-spacing:-0.448px;">VND 9,900</div>
<div class="t " style="left:1677.5px;top:1193.3px;font-size:21px;line-height:25px;color:#4a35b5;letter-spacing:-0.266px;">OD5076508</div>
<div class="t " style="left:2037.5px;top:1187.4px;font-size:21px;line-height:25px;color:#8c95a3;letter-spacing:-0.27px;">Order Time</div>
<div class="t " style="left:2037.5px;top:1218.3px;font-size:21px;line-height:25px;color:#1d2129;letter-spacing:-0.04px;">18 Mar 2026 11:29</div>
<svg class="b" style="left:2413.0px;top:1202.5px;" width="30" height="30" viewBox="0 0 30 30"><path d="M12.5 2.6 L3 2.6 Q1.2 2.6 1.2 4.4 L1.2 25.2 Q1.2 27 3 27 L23.6 27 Q25.4 27 25.4 25.2 L25.4 14" fill="none" stroke="#7f8a99" stroke-width="2.1" stroke-linecap="round"/><path d="M24.5 1.5 Q26.8 2.6 27.2 4.6 L15 16.8 L8.6 18.6 L10.4 12.2 Z" fill="none" stroke="#7f8a99" stroke-width="2.1" stroke-linejoin="round"/></svg>
<svg class="b" style="left:2475.0px;top:1203.5px;" width="26" height="30" viewBox="0 0 26 30"><path d="M2.8 1.3 L15.5 1.3 L22.5 8.3 L22.5 25 Q22.5 26.8 20.7 26.8 L2.8 26.8 Q1 26.8 1 25 L1 3.1 Q1 1.3 2.8 1.3 Z" fill="none" stroke="#7f8a99" stroke-width="2" stroke-linejoin="round"/><path d="M15.2 1.5 L15.2 8.5 L22.3 8.5" fill="none" stroke="#7f8a99" stroke-width="1.8"/><path d="M6 14.8 L17.4 14.8 M6 20.5 L13 20.5" stroke="#7f8a99" stroke-width="2"/></svg>
<div class="b" style="left:2495.0px;top:965.0px;width:60.0px;height:54.0px;background:#a9adb8;border-radius:27px 0 0 27px;"></div>
<svg class="b" style="left:2513.0px;top:982.0px;" width="14" height="22" viewBox="0 0 14 22"><path d="M11.5 1.5 L2.5 10.5 L11.5 19.5" fill="none" stroke="#fff" stroke-width="2.2"/></svg>
<div class="b" style="left:2381.8px;top:1091.3px;width:135.7px;height:107.3px;background:#fff;border-radius:6px;box-shadow:0 3px 12px rgba(0,0,0,0.12);"></div>
<div class="b" style="left:2380.0px;top:1091.3px;width:137.1px;height:51.3px;background:#fff67a;border:3.6px solid #e8191f;border-radius:2px;"></div>
<div class="t " style="left:2400.5px;top:1107.0px;font-size:21px;line-height:25px;color:#4a5030;letter-spacing:-0.158px;">Copy link</div>
<div class="t " style="left:2400.5px;top:1154.8px;font-size:21px;line-height:25px;color:#4f5969;letter-spacing:-0.285px;">Unapprove</div>
<svg class="b" style="left:2100.0px;top:1040.0px;" width="300" height="100" viewBox="0 0 300 100"><path d="M32.2 23.9 L252.1 52.2 L250.5 43.7 L277.6 61.5 L246.2 71.5 L249.4 63.9 L32 25.9 Z" fill="#e8191f" stroke="#e8191f" stroke-width="1" stroke-linejoin="round"/></svg>
</body></html>
